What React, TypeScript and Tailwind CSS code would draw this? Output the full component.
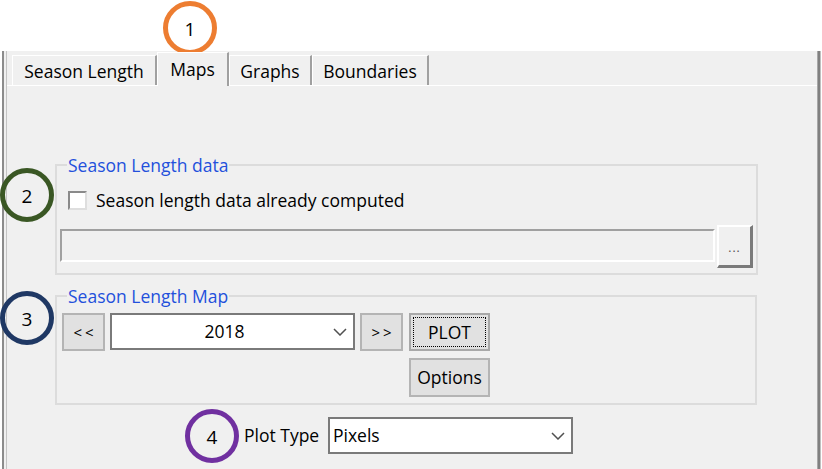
import React from "react";

const UI = { fontFamily: '"Open Sans", "Noto Sans", sans-serif' };

function Circle({ x, y, color, n }: { x: number; y: number; color: string; n: string }) {
  return (
    <div
      className="absolute flex items-center justify-center rounded-full border-[5px] w-[54px] h-[54px] text-[19px] text-black pt-[2px]"
      style={{ left: x - 27, top: y - 27, borderColor: color, fontFamily: '"Open Sans", sans-serif' }}
    >
      {n}
    </div>
  );
}

function Chevron() {
  return (
    <svg width="14" height="8" viewBox="0 0 14 8" className="shrink-0">
      <path d="M1 1 L7 7 L13 1" fill="none" stroke="#505050" strokeWidth="1.5" />
    </svg>
  );
}

function Tab({ label, w, selected }: { label: string; w: number; selected?: boolean }) {
  return (
    <div
      className={
        selected
          ? "relative z-10 -mb-[1px] h-[34px] flex justify-center pt-[3px] bg-[#f0f0f0] border-l border-t border-white border-r-2 border-r-[#a0a0a0] text-[17.5px] text-black"
          : "h-[30px] flex justify-center pt-[2px] bg-[#f0f0f0] border-l border-t border-white border-r-2 border-r-[#a0a0a0] text-[17.5px] text-black"
      }
      style={{ width: w }}
    >
      {label}
    </div>
  );
}

export default function App() {
  return (
    <div className="relative w-[822px] h-[469px] bg-white overflow-hidden" style={UI}>
      <div className="h-[51px]" />
      <div className="ml-[2px] w-[820px] h-[418px] flex">
        <div className="w-[2px] bg-[#8c8c8c]" />
        <div className="w-[2px] bg-[#f0f0f0]" />
        <div className="w-[1px] bg-[#c4c4c4]" />
        <div className="w-[810px] bg-[#f0f0f0] flex flex-col">
          {/* tab strip */}
          <div className="h-[34px] flex items-end pl-[5px]">
            <Tab label="Season Length" w={145} />
            <Tab label="Maps" w={72} selected />
            <Tab label="Graphs" w={83} />
            <Tab label="Boundaries" w={117} />
          </div>
          {/* panel */}
          <div className="flex-1 border-t border-white flex flex-col">
            <fieldset className="ml-[48px] mt-[69px] w-[702px] border-2 border-[#dcdcdc] px-[3px] pb-[5px]">
              <legend className="ml-[7px] px-[1px] text-[17.5px] leading-[20px] text-[#2350dc]">Season Length data</legend>
              <div className="mt-[15px] ml-[8px] h-[20px] flex items-center gap-[9px]">
                <div className="w-[19px] h-[19px] bg-white border-2 border-t-[#8a8a8a] border-l-[#8a8a8a] border-b-[#dedede] border-r-[#dedede]" />
                <span className="text-[17.5px] text-black leading-[20px]">Season length data already computed</span>
              </div>
              <div className="mt-[15px] flex items-start gap-[2px]">
                <div className="mt-[4px] w-[655px] h-[33px] bg-[#f0f0f0] border-2 border-t-[#a0a0a0] border-l-[#a0a0a0] border-b-white border-r-white" />
                <div className="w-[36px] h-[43px] bg-[#f0f0f0] border-t-2 border-l-2 border-white border-b-[3px] border-r-[3px] border-b-[#7a7a7a] border-r-[#7a7a7a] flex items-center justify-center text-[12px] text-[#505050] tracking-[1px] pt-[4px]">
                  ...
                </div>
              </div>
            </fieldset>

            <fieldset className="ml-[48px] mt-[11px] w-[702px] border-2 border-[#dcdcdc] px-[3px] pb-[6px]">
              <legend className="ml-[7px] px-[1px] text-[17.5px] leading-[20px] text-[#2350dc]">Season Length Map</legend>
              <div className="mt-[7px] ml-[2px] flex items-start">
                <div className="w-[43px] h-[38px] bg-[#e1e1e1] border-2 border-[#b4b4b4] flex items-center justify-center text-[15px] tracking-[3px] pl-[3px] text-black">
                  &lt;&lt;
                </div>
                <div className="ml-[5px] w-[245px] h-[37px] bg-white border-2 border-[#7a7a7a] flex items-center pr-[6px]">
                  <span className="flex-1 text-center text-[17.5px] text-black pl-[4px]">2018</span>
                  <Chevron />
                </div>
                <div className="ml-[5px] w-[43px] h-[38px] bg-[#e1e1e1] border-2 border-[#b4b4b4] flex items-center justify-center text-[15px] tracking-[3px] pl-[3px] text-black">
                  &gt;&gt;
                </div>
                <div className="ml-[6px] flex flex-col gap-[7px]">
                  <div className="w-[81px] h-[38px] bg-[#e1e1e1] border-2 border-[#a8a8a8] p-[2px]">
                    <div className="w-full h-full border border-dotted border-black flex items-center justify-center text-[17.5px] text-black">
                      PLOT
                    </div>
                  </div>
                  <div className="w-[81px] h-[39px] bg-[#e1e1e1] border-2 border-[#b4b4b4] flex items-center justify-center text-[17.5px] text-black">
                    Options
                  </div>
                </div>
              </div>
            </fieldset>

            <div className="mt-[12px] ml-[237px] flex items-center">
              <span className="w-[84px] text-[17.5px] text-black">Plot Type</span>
              <div className="w-[245px] h-[37px] bg-white border-2 border-[#7a7a7a] flex items-center pl-[3px] pr-[6px]">
                <span className="flex-1 text-[17.5px] text-black">Pixels</span>
                <Chevron />
              </div>
            </div>
          </div>
        </div>
        <div className="w-[1px] bg-[#a8a8a8]" />
        <div className="w-[2px] bg-[#808080]" />
        <div className="w-[1px] bg-[#c0c0c0]" />
      </div>

      <Circle x={190} y={28} color="#ed7d31" n="1" />
      <Circle x={27} y={195} color="#3a5724" n="2" />
      <Circle x={27} y={318} color="#1f3864" n="3" />
      <Circle x={212} y={436} color="#7030a0" n="4" />
    </div>
  );
}
